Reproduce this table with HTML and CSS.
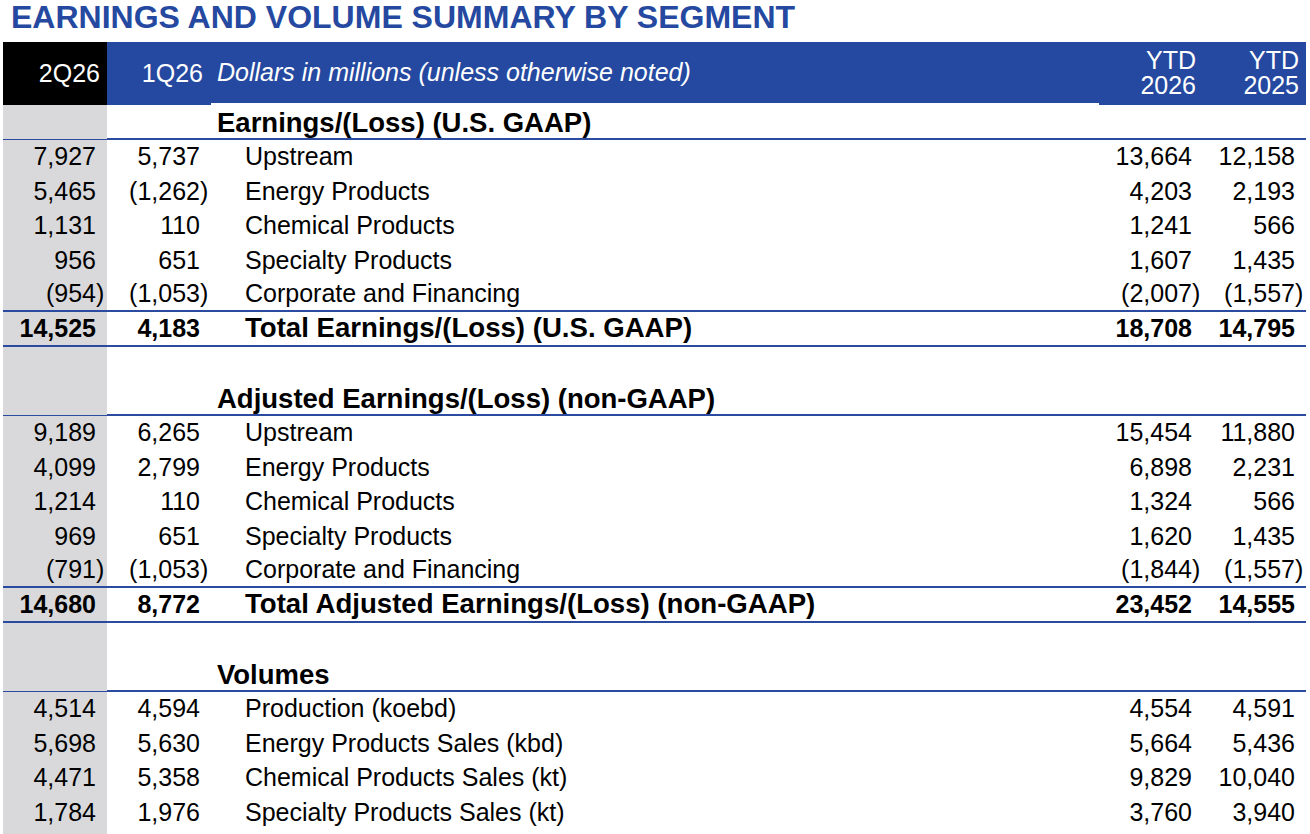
FILE: index.html
```html
<!DOCTYPE html>
<html lang="en">
<head>
<meta charset="utf-8">
<title>Earnings and Volume Summary by Segment</title>
<link rel="stylesheet" href="styles.css">
</head>
<body>
<h1 class="title">EARNINGS AND VOLUME SUMMARY BY SEGMENT</h1>
<div class="sheet">
  <div class="row head">
    <div class="c n hq">2Q26</div>
    <div class="c n hb">1Q26</div>
    <div class="c hdesc">Dollars in millions (unless otherwise noted)</div>
    <div class="c n hb ytd"><span>YTD</span><span>2026</span></div>
    <div class="c n hb ytd"><span>YTD</span><span>2025</span></div>
  </div>

  <div class="row rule">
    <div class="c g"></div><div class="c"></div>
    <div class="c sec">Earnings/(Loss) (U.S. GAAP)</div>
    <div class="c"></div><div class="c"></div>
  </div>
  <div class="row">
    <div class="c g n">7,927</div><div class="c n">5,737</div>
    <div class="c lab">Upstream</div>
    <div class="c n">13,664</div><div class="c n">12,158</div>
  </div>
  <div class="row">
    <div class="c g n">5,465</div><div class="c n"><span class="neg">(1,262)</span></div>
    <div class="c lab">Energy Products</div>
    <div class="c n">4,203</div><div class="c n">2,193</div>
  </div>
  <div class="row">
    <div class="c g n">1,131</div><div class="c n">110</div>
    <div class="c lab">Chemical Products</div>
    <div class="c n">1,241</div><div class="c n">566</div>
  </div>
  <div class="row">
    <div class="c g n">956</div><div class="c n">651</div>
    <div class="c lab">Specialty Products</div>
    <div class="c n">1,607</div><div class="c n">1,435</div>
  </div>
  <div class="row rule">
    <div class="c g n"><span class="neg">(954)</span></div><div class="c n"><span class="neg">(1,053)</span></div>
    <div class="c lab">Corporate and Financing</div>
    <div class="c n"><span class="neg">(2,007)</span></div><div class="c n"><span class="neg">(1,557)</span></div>
  </div>
  <div class="row rule total">
    <div class="c g n">14,525</div><div class="c n">4,183</div>
    <div class="c lab">Total Earnings/(Loss) (U.S. GAAP)</div>
    <div class="c n">18,708</div><div class="c n">14,795</div>
  </div>
  <div class="row">
    <div class="c g"></div><div class="c"></div><div class="c"></div><div class="c"></div><div class="c"></div>
  </div>

  <div class="row rule">
    <div class="c g"></div><div class="c"></div>
    <div class="c sec">Adjusted Earnings/(Loss) (non-GAAP)</div>
    <div class="c"></div><div class="c"></div>
  </div>
  <div class="row">
    <div class="c g n">9,189</div><div class="c n">6,265</div>
    <div class="c lab">Upstream</div>
    <div class="c n">15,454</div><div class="c n">11,880</div>
  </div>
  <div class="row">
    <div class="c g n">4,099</div><div class="c n">2,799</div>
    <div class="c lab">Energy Products</div>
    <div class="c n">6,898</div><div class="c n">2,231</div>
  </div>
  <div class="row">
    <div class="c g n">1,214</div><div class="c n">110</div>
    <div class="c lab">Chemical Products</div>
    <div class="c n">1,324</div><div class="c n">566</div>
  </div>
  <div class="row">
    <div class="c g n">969</div><div class="c n">651</div>
    <div class="c lab">Specialty Products</div>
    <div class="c n">1,620</div><div class="c n">1,435</div>
  </div>
  <div class="row rule">
    <div class="c g n"><span class="neg">(791)</span></div><div class="c n"><span class="neg">(1,053)</span></div>
    <div class="c lab">Corporate and Financing</div>
    <div class="c n"><span class="neg">(1,844)</span></div><div class="c n"><span class="neg">(1,557)</span></div>
  </div>
  <div class="row rule total">
    <div class="c g n">14,680</div><div class="c n">8,772</div>
    <div class="c lab">Total Adjusted Earnings/(Loss) (non-GAAP)</div>
    <div class="c n">23,452</div><div class="c n">14,555</div>
  </div>
  <div class="row">
    <div class="c g"></div><div class="c"></div><div class="c"></div><div class="c"></div><div class="c"></div>
  </div>

  <div class="row rule">
    <div class="c g"></div><div class="c"></div>
    <div class="c sec">Volumes</div>
    <div class="c"></div><div class="c"></div>
  </div>
  <div class="row">
    <div class="c g n">4,514</div><div class="c n">4,594</div>
    <div class="c lab">Production (koebd)</div>
    <div class="c n">4,554</div><div class="c n">4,591</div>
  </div>
  <div class="row">
    <div class="c g n">5,698</div><div class="c n">5,630</div>
    <div class="c lab">Energy Products Sales (kbd)</div>
    <div class="c n">5,664</div><div class="c n">5,436</div>
  </div>
  <div class="row">
    <div class="c g n">4,471</div><div class="c n">5,358</div>
    <div class="c lab">Chemical Products Sales (kt)</div>
    <div class="c n">9,829</div><div class="c n">10,040</div>
  </div>
  <div class="row">
    <div class="c g n">1,784</div><div class="c n">1,976</div>
    <div class="c lab">Specialty Products Sales (kt)</div>
    <div class="c n">3,760</div><div class="c n">3,940</div>
  </div>
  <div class="row">
    <div class="c g"></div><div class="c"></div><div class="c"></div><div class="c"></div><div class="c"></div>
  </div>
</div>
</body>
</html>
```

FILE: styles.css
```css
html, body {
  margin: 0;
  padding: 0;
  background: #ffffff;
}

body {
  font-family: "Liberation Sans", Arial, sans-serif;
  color: #000000;
  overflow: hidden;
}

.title {
  margin: 0;
  height: 42px;
  padding-left: 11px;
  font-size: 32px;
  line-height: 34px;
  font-weight: bold;
  color: #2549a0;
  white-space: nowrap;
}

.sheet {
  margin-left: 3px;
  width: 1303px;
}

.row {
  display: grid;
  grid-template-columns: 104px 104px 888px 104px 103px;
  height: 34.5px;
  box-sizing: border-box;
  font-size: 25px;
}

.row.rule {
  border-bottom: 2px solid #2a4b9f;
}

.c {
  display: flex;
  align-items: center;
  white-space: nowrap;
  min-width: 0;
}

.g {
  background: #d9d9db;
}

.n {
  justify-content: flex-end;
  padding-right: 11px;
}

.neg {
  margin-right: -0.333em;
}

.lab {
  padding-left: 34px;
}

.sec {
  padding-left: 6px;
  padding-top: 2px;
  font-size: 27.5px;
  font-weight: bold;
}

.total {
  font-weight: bold;
}

.total .lab {
  font-size: 27.6px;
}

/* header band */
.row.head {
  height: 63px;
  color: #ffffff;
}

.hq {
  background: #000000;
  padding-right: 7px;
}

.hb {
  background: #2549a0;
  padding-right: 8px;
}

.hdesc {
  background: #2549a0;
  font-style: italic;
  padding-left: 6px;
  box-sizing: border-box;
  border-bottom: 2px solid #ffffff;
}

.ytd {
  flex-direction: column;
  justify-content: center;
  align-items: flex-end;
  padding-right: 7px;
  padding-bottom: 2px;
  box-sizing: border-box;
}

.ytd span {
  display: block;
  height: 25px;
  line-height: 25px;
}
```
